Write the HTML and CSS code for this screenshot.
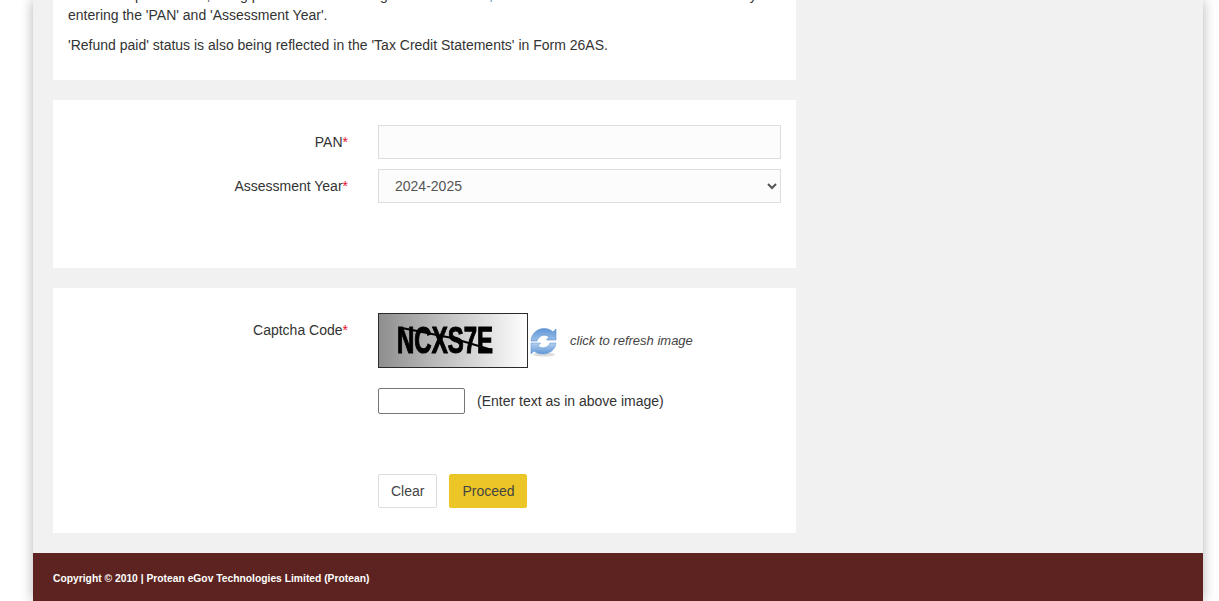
FILE: index.html
```html
<!DOCTYPE html>
<html lang="en">
<head>
    <meta charset="UTF-8">
    <meta name="viewport" content="width=device-width, initial-scale=1.0">
    <title>Status of Tax Refunds</title>
    <link rel="stylesheet" href="styles.css">
</head>
<body>

    <div class="wrapper">
        <div class="card notice">
            <p class="first-line">Status of uploaded file, using portal and other being <span class="link">the refund bank,</span> the status of refund can be seen online by</p>
            <p>entering the 'PAN' and 'Assessment Year'.</p>
            <p class="second-para">'Refund paid' status is also being reflected in the 'Tax Credit Statements' in Form 26AS.</p>
        </div>

        <form class="card fields">
            <label class="label" for="pan">PAN<span class="req">*</span></label>
            <input class="control" type="text" id="pan" name="pan">

            <label class="label" for="year">Assessment Year<span class="req">*</span></label>
            <select class="control year" id="year" name="year">
                <option>2024-2025</option>
                <option>2023-2024</option>
            </select>
        </form>

        <form class="card captcha-card">
            <label class="label" for="captcha">Captcha Code<span class="req">*</span></label>
            <div class="captcha-col">
                <div class="captcha-row">
                    <svg class="captcha-img" width="150" height="55" viewBox="0 0 150 55">
                        <defs>
                            <linearGradient id="captchaBg" x1="0" x2="1" y1="0" y2="0">
                                <stop offset="0" stop-color="#8e8e8e"/>
                                <stop offset="1" stop-color="#ffffff"/>
                            </linearGradient>
                            <filter id="soften"><feGaussianBlur stdDeviation="0.35"/></filter>
                        </defs>
                        <rect x="0.5" y="0.5" width="149" height="54" fill="url(#captchaBg)" stroke="#2b2b2b"/>
                        <g filter="url(#soften)">
                            <text class="captcha-text" x="19" y="40" textLength="96" lengthAdjust="spacingAndGlyphs">NCXS7E</text>
                            <path d="M24 15 L74 25 L114 37" fill="none" stroke="#000" stroke-width="2"/>
                        </g>
                    </svg>
                    <svg class="refresh" width="28" height="30" viewBox="0 0 28 30">
                        <defs>
                            <linearGradient id="arrowTop" x1="0" x2="0" y1="0" y2="1">
                                <stop offset="0" stop-color="#5f97d6"/>
                                <stop offset="1" stop-color="#9cc0ea"/>
                            </linearGradient>
                            <linearGradient id="arrowBottom" x1="0" x2="0" y1="0" y2="1">
                                <stop offset="0" stop-color="#b5d0f0"/>
                                <stop offset="1" stop-color="#5f97d6"/>
                            </linearGradient>
                        </defs>
                        <ellipse cx="14" cy="27.5" rx="11" ry="2" fill="#ddd"/>
                        <path d="M1 14 C1.5 6 8 1.5 14 1.5 C18 1.5 21 3 23 5 L26 2 L26 13 L16.5 13 L19 10 C15 6.5 8.5 8.5 7 14 Z" fill="url(#arrowTop)" stroke="#5a8fcc" stroke-width="0.6"/>
                        <path d="M26 16 C25.5 23 19 27 13 27 C9 27 6 26 4 24 L1 27 L1 16 L10.5 16 L8 19 C12 22.5 18.5 20.5 20 16 Z" fill="url(#arrowBottom)" stroke="#6b9dd6" stroke-width="0.6"/>
                    </svg>
                    <em class="refresh-note">click to refresh image</em>
                </div>
                <div class="entry-row">
                    <input class="entry" type="text" id="captcha" name="captcha">
                    <span>(Enter text as in above image)</span>
                </div>
                <div class="buttons">
                    <button class="btn" type="reset">Clear</button>
                    <button class="btn proceed" type="submit">Proceed</button>
                </div>
            </div>
        </form>

        <div class="footer">Copyright &copy; 2010 | Protean eGov Technologies Limited (Protean)</div>
    </div>

</body>
</html>
```

FILE: styles.css
```css
* {
    margin: 0;
    padding: 0;
    box-sizing: border-box;
    font-family: 'Liberation Sans', Arial, sans-serif;
}
html, body {
    height: 601px;
    overflow: hidden;
    background-color: #ffffff;
}
body {
    color: #333;
    font-size: 14px;
}
.wrapper {
    width: 1170px;
    margin-left: 33px;
    background-color: #f1f1f1;
    box-shadow: 0 0 12px rgba(0, 0, 0, 0.3);
    display: flex;
    flex-direction: column;
    gap: 20px;
}
.card {
    background-color: #ffffff;
    width: 743px;
    margin-left: 20px;
    padding: 25px 15px;
}
.notice {
    margin-top: -15px;
    height: 95px;
    padding-top: 0;
    line-height: 20px;
}
.first-line {
    white-space: nowrap;
}
.second-para {
    margin-top: 10px;
}
.link {
    color: #2a5fa8;
}
.label {
    text-align: right;
    padding-right: 15px;
    color: #333;
}
.req {
    color: #e8112d;
}
.fields {
    height: 168px;
    display: grid;
    grid-template-columns: 295px 403px;
    column-gap: 15px;
    row-gap: 10px;
    grid-auto-rows: 34px;
    align-items: center;
}
.control {
    width: 403px;
    height: 34px;
    background-color: #fcfcfc;
    border: 1px solid #dddddd;
    color: #555;
    font-size: 14px;
    outline: none;
}
.year {
    padding-left: 12px;
}
.captcha-card {
    height: 245px;
    display: grid;
    grid-template-columns: 295px 403px;
    column-gap: 15px;
}
.captcha-card .label {
    padding-top: 9px;
}
.captcha-row {
    display: flex;
    align-items: center;
    height: 55px;
}
.refresh {
    margin: 2px 0 0 2px;
}
.refresh-note {
    margin-left: 12px;
    font-size: 13px;
    color: #444;
}
.captcha-text {
    font-family: 'Liberation Sans', sans-serif;
    font-size: 37px;
    font-weight: bold;
    fill: #000;
    stroke: #000;
    stroke-width: 1.2;
}
.entry-row {
    display: flex;
    align-items: center;
    gap: 12px;
    margin-top: 20px;
}
.entry {
    width: 87px;
    height: 26px;
    background-color: #fff;
    border: 1px solid #767676;
    border-radius: 2px;
    outline: none;
}
.buttons {
    display: flex;
    gap: 12px;
    margin-top: 60px;
}
.btn {
    height: 34px;
    padding: 0 12px;
    background-color: #ffffff;
    border: 1px solid #dddddd;
    border-radius: 2px;
    color: #444;
    font-size: 14px;
}
.proceed {
    width: 78px;
    background-color: #ecc526;
    border-color: #ecc526;
}
.footer {
    height: 48px;
    background-color: #5c2320;
    color: #ffffff;
    font-size: 10.3px;
    font-weight: bold;
    line-height: 51px;
    padding-left: 20px;
}
```
